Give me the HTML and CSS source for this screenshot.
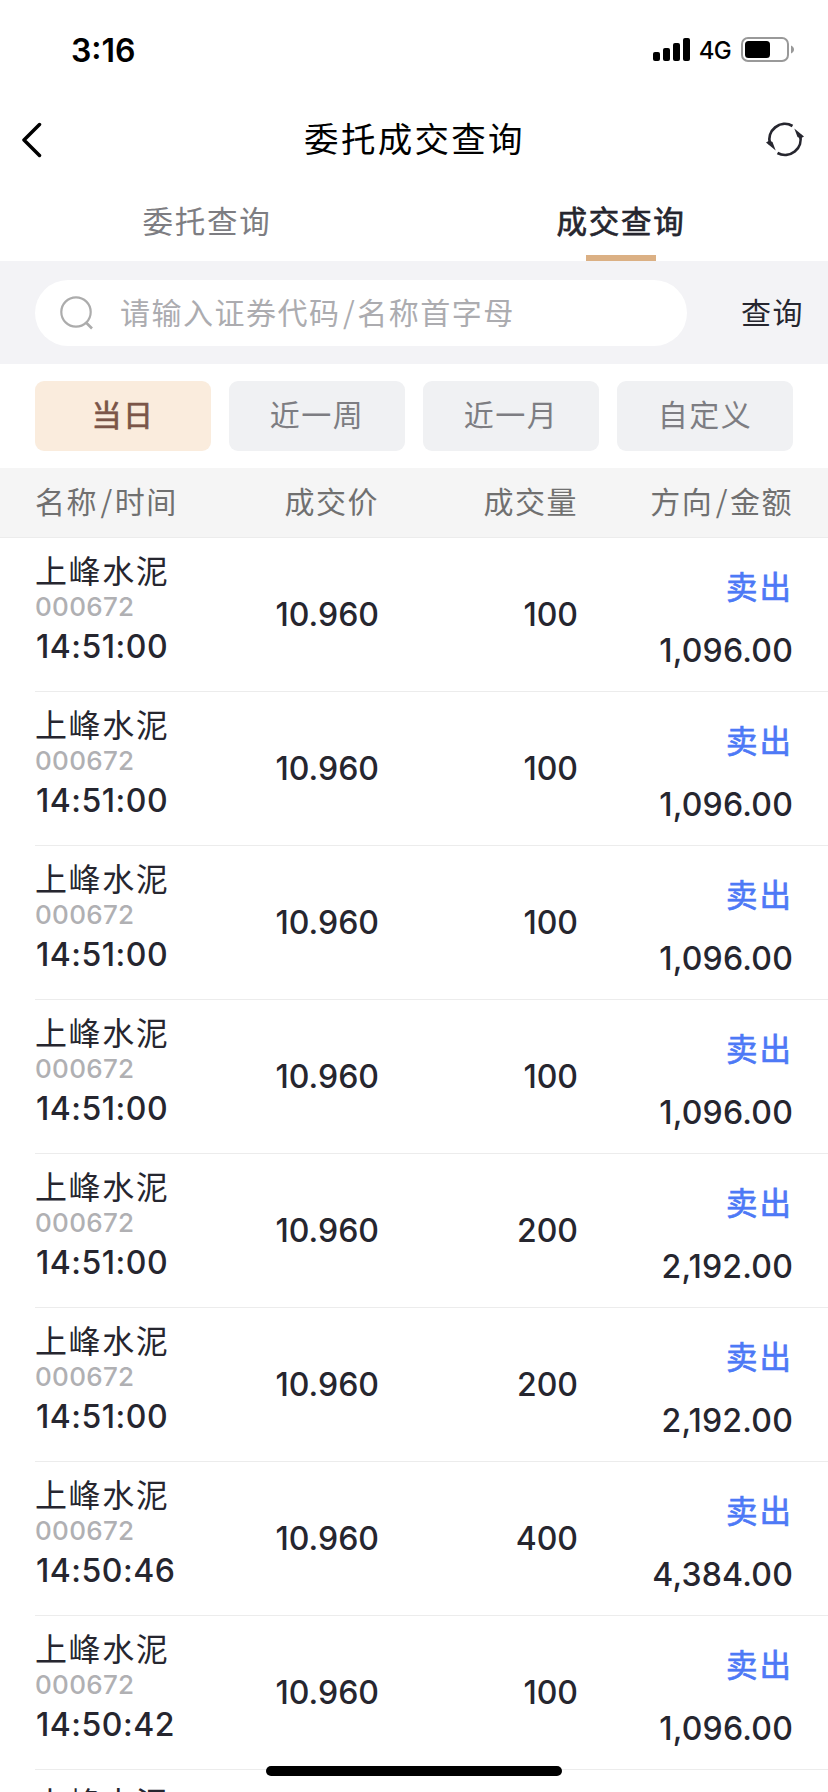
FILE: index.html
```html
<!DOCTYPE html>
<html lang="zh-CN">
<head>
  <meta charset="UTF-8" />
  <meta name="viewport" content="width=device-width, initial-scale=1.0"/>
  <title>委托成交查询</title>
  <link rel="stylesheet" href="styles.css">
</head>
<body>

  <div class="status-bar">
    <span class="time">3:16</span>
    <svg class="signal" width="37" height="23" viewBox="0 0 37 23">
      <rect x="0" y="14" width="7" height="9" rx="2"/>
      <rect x="10" y="10" width="7" height="13" rx="2"/>
      <rect x="20" y="5" width="7" height="18" rx="2"/>
      <rect x="30" y="0" width="7" height="23" rx="2"/>
    </svg>
    <span class="network">4G</span>
    <svg class="battery" width="53" height="25" viewBox="0 0 53 25">
      <rect x="1" y="1" width="46" height="23" rx="6" fill="none" stroke="#999" stroke-width="2"/>
      <rect x="4" y="4" width="25" height="17" rx="3.5"/>
      <path d="M50 8.5c4 1.5 4 6.500 0 8z" fill="#999"/>
    </svg>
  </div>

  <div class="nav">
    <svg class="back" width="20" height="36" viewBox="0 0 20 36">
      <path d="M17.500 2.500L2 18L17.500 33.500" fill="none" stroke="#000" stroke-width="3.500" stroke-linecap="round" stroke-linejoin="round"/>
    </svg>
    <h1>委托成交查询</h1>
    <svg class="refresh" width="40" height="36" viewBox="0 0 40 36">
      <g fill="none" stroke="#26262f" stroke-width="2.800">
        <path d="M27.500 3.900A15.600 15.600 0 0 0 5 22"/>
        <path d="M12.500 31A15.600 15.600 0 0 0 35 13"/>
      </g>
      <path d="M29.300 6.500L39 14.500L35.500 16.500L32.500 15z" fill="#26262f"/>
      <path d="M10.700 28.500L1 20.500L4.500 18.500L7.500 20z" fill="#26262f"/>
    </svg>
  </div>

  <div class="tabs">
    <div class="tab">委托查询</div>
    <div class="tab active">成交查询</div>
  </div>

  <div class="search">
    <div class="search-box">
      <svg width="34" height="34" viewBox="0 0 34 34">
        <circle cx="16" cy="16" r="14.700" fill="none" stroke="#acacac" stroke-width="2.200"/>
        <path d="M26 26.500L32 32.500" fill="none" stroke="#acacac" stroke-width="2.600"/>
      </svg>
      <span>请输入证券代码<i>/</i>名称首字母</span>
    </div>
    <div class="search-btn">查询</div>
  </div>

  <div class="filters">
    <div class="chip selected">当日</div>
    <div class="chip">近一周</div>
    <div class="chip">近一月</div>
    <div class="chip">自定义</div>
  </div>

  <div class="table-head">
    <div>名称<i>/</i>时间</div>
    <div>成交价</div>
    <div>成交量</div>
    <div>方向<i>/</i>金额</div>
  </div>

  <div id="list"></div>

  <div class="home-indicator"></div>

  <script>
    const deals = [
      ["14:51:00", "100", "1,096.00"],
      ["14:51:00", "100", "1,096.00"],
      ["14:51:00", "100", "1,096.00"],
      ["14:51:00", "100", "1,096.00"],
      ["14:51:00", "200", "2,192.00"],
      ["14:51:00", "200", "2,192.00"],
      ["14:50:46", "400", "4,384.00"],
      ["14:50:42", "100", "1,096.00"]
    ];

    const rows = deals.map(([time, volume, amount]) => `
      <div class="row">
        <div class="stock">
          <div class="name">上峰水泥</div>
          <div class="code">000672</div>
          <div class="num">${time}</div>
        </div>
        <div class="num">10.960</div>
        <div class="num">${volume}</div>
        <div class="deal">
          <div class="side">卖出</div>
          <div class="num amount">${amount}</div>
        </div>
      </div>
    `);

    // next row only peeks in at the bottom
    rows.push('<div class="row peek"><div class="name">上峰水泥</div></div>');
    document.getElementById('list').innerHTML = rows.join('');
  </script>

</body>
</html>
```
FILE: styles.css
```css
* {
  box-sizing: border-box;
}
body {
  margin: 0;
  width: 828px;
  height: 1792px;
  overflow: hidden;
  background: #fff;
  color: #26262f;
  font-family: Inter, "Noto Sans CJK SC", sans-serif;
}
svg {
  display: block;
}
i {
  font-family: "Noto Sans CJK SC", sans-serif;
  font-style: normal;
  line-height: 1;
  padding: 0 1px 0 2.5px;
}

/* status bar */
.status-bar {
  display: flex;
  align-items: center;
  height: 99px;
  padding: 0 34px 0 71px;
  color: #000;
}
.time {
  flex: 1;
  margin-top: 1px;
  font-size: 32px;
  font-weight: 600;
}
.network {
  margin: 2px 10px 0 9px;
  font-size: 24px;
  font-weight: 500;
  letter-spacing: -0.7px;
}

/* title */
.nav {
  display: flex;
  align-items: center;
  justify-content: space-between;
  height: 82px;
  padding: 0 23px 0 22px;
}
h1 {
  margin: 0 0 0 22px;
  color: #000;
  font-size: 34.5px;
  font-weight: 400;
  line-height: 48px;
  letter-spacing: 2.3px;
}

/* tabs */
.tabs {
  display: flex;
  height: 80px;
}
.tab {
  flex: 1;
  display: flex;
  flex-direction: column;
  align-items: center;
  justify-content: space-between;
  height: 80px;
  color: #7d7d82;
  font-size: 30.5px;
  line-height: 82px;
  letter-spacing: 1.8px;
}
.tab.active {
  color: #26262f;
  -webkit-text-stroke: 0.7px #26262f;
}
.tab.active::after {
  content: "";
  flex: none;
  width: 70px;
  height: 6px;
  margin-top: -8px;
  background: #dbb084;
}

/* search */
.search {
  display: flex;
  align-items: center;
  height: 103px;
  padding: 0 24px 0 35px;
  background: #f3f3f6;
  font-size: 30px;
  line-height: 40px;
  letter-spacing: 1.5px;
}
.search-box {
  display: flex;
  align-items: center;
  width: 652px;
  height: 66px;
  padding-left: 25px;
  border-radius: 33px;
  background: #fff;
  color: #acacb0;
}
.search-box span {
  margin-left: 26px;
}
.search-btn {
  margin-left: auto;
}

/* date range */
.filters {
  display: flex;
  gap: 18px;
  height: 104px;
  padding: 17px 35px;
}
.chip {
  flex: 1;
  height: 70px;
  border-radius: 9px;
  background: #f0f1f3;
  color: #7d7d82;
  font-size: 30px;
  line-height: 69px;
  letter-spacing: 1.5px;
  text-align: center;
}
.chip.selected {
  background: #faecdd;
  color: #7b5548;
  -webkit-text-stroke: 0.7px #7b5548;
}

/* table */
.table-head,
.row {
  display: grid;
  grid-template-columns: 170px 174px 199px 215px;
}
.table-head {
  height: 70px;
  padding-left: 35px;
  border-bottom: 1px solid #ececec;
  background: #f5f5f5;
  color: #707070;
  font-size: 30px;
  line-height: 69px;
  letter-spacing: 1.5px;
  white-space: nowrap;
}
.table-head div:not(:first-child) {
  text-align: right;
}
.row {
  height: 154px;
  margin-left: 35px;
  border-bottom: 1px solid #ececec;
  align-items: center;
}
.row > .num,
.deal {
  text-align: right;
}
.stock,
.deal {
  align-self: start;
}
.num {
  font-size: 32px;
  font-weight: 500;
  line-height: 38px;
}
.name {
  margin-top: 12px;
  font-size: 32px;
  line-height: 43px;
  letter-spacing: 1.6px;
}
.code {
  color: #b0b0b3;
  font-size: 26px;
  font-weight: 500;
  line-height: 27px;
  letter-spacing: 0.3px;
}
.stock .num {
  margin-top: 8px;
  padding-left: 1px;
  letter-spacing: 0.5px;
}
.side {
  margin-top: 29px;
  color: #4d79f6;
  font-size: 31.5px;
  line-height: 42px;
  letter-spacing: 2px;
  -webkit-text-stroke: 0.7px #4d79f6;
}
.deal .amount {
  margin-top: 23px;
  letter-spacing: 0.2px;
}
.row.peek {
  height: 23px;
  overflow: hidden;
  border-bottom: 0;
  align-items: start;
}

.home-indicator {
  position: absolute;
  left: 266px;
  top: 1766px;
  width: 296px;
  height: 10px;
  border-radius: 5px;
  background: #000;
}
```
